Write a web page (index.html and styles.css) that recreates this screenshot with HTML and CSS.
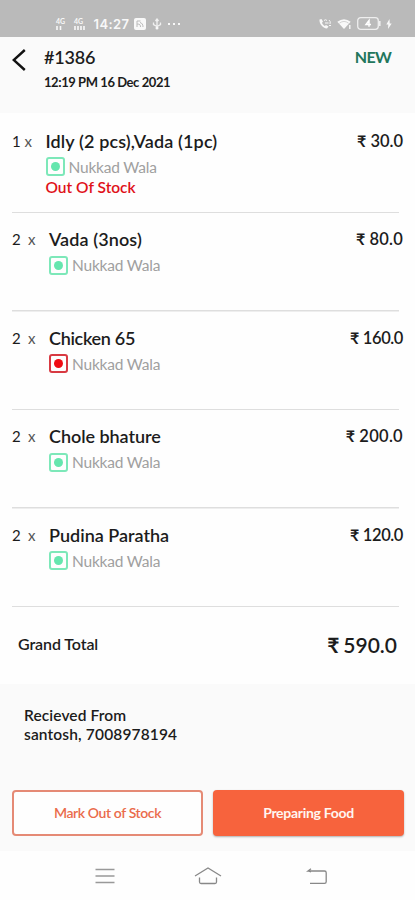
FILE: index.html
```html
<!DOCTYPE html>
<html lang="en">
<head>
<meta charset="utf-8">
<title>Order #1386</title>
<link rel="stylesheet" href="styles.css">
</head>
<body>
<div class="status">
  <div class="sim"><span>4G</span><svg width="7" height="4" viewBox="0 0 7 4"><path d="M1 0v4M4.500 0v4" stroke="#f8f8f8" stroke-width="1.600"/></svg></div>
  <div class="sim sim2"><span>4G</span><svg width="11" height="4" viewBox="0 0 11 4"><path d="M1 0v4M4 0v4M7 0v4M10 0v4" stroke="#f8f8f8" stroke-width="1.600"/></svg></div>
  <span class="clock">14:27</span>
  <svg class="s-cast" width="12" height="12" viewBox="0 0 12 12"><rect width="12" height="12" rx="2" fill="#f8f8f8"/><path d="M3 9V3h3.500M3 6c3 0 3.500 1 3.500 3M6 4.500c2 .5 3 2 3 4.500" fill="none" stroke="#bababa" stroke-width="1"/></svg>
  <svg class="s-usb" width="10" height="12" viewBox="0 0 10 12"><path d="M5 1v9M1.500 4.500v2L5 8.500l3.500-2v-2M3.500 3L5 1l1.500 2" fill="none" stroke="#f0f0f0" stroke-width="1.300"/><circle cx="5" cy="10" r="1.500" fill="#f8f8f8"/></svg>
  <span class="more"><i></i><i></i><i></i></span>
  <div class="s-right">
    <svg width="14" height="12" viewBox="0 0 14 12"><path d="M1.500 1.500c-.5 4 3 8.500 7.500 9l1.500-2-2.500-1.500-1.200 1C5.300 7 4.500 6 4 4.700l1-1.200L3.500 1z" fill="#f8f8f8"/><path d="M6 2.500q1.500-1.500 3 0M7 5h3.500M11 2q2 1.500 1 4M11 7.500h2" fill="none" stroke="#f8f8f8" stroke-width="1"/></svg>
    <svg width="15" height="12" viewBox="0 0 15 12"><path d="M.3 3.800Q7-1.500 13.700 3.800L7 11z" fill="#f8f8f8"/><path d="M2.400 5.200q4.600-3.500 9.200 0" fill="none" stroke="#bababa" stroke-width=".6"/><path d="M12.800 7v4" stroke="#f8f8f8" stroke-width="1.400"/></svg>
    <svg width="24" height="13" viewBox="0 0 24 13"><rect x=".7" y=".7" width="20.600" height="11.600" rx="3" fill="none" stroke="#eee" stroke-width="1.300"/><path d="M22.800 4v5" stroke="#eee" stroke-width="1.600"/><path d="M12 9.800V3.500L9 7.500h5" fill="none" stroke="#fff" stroke-width="1.500"/></svg>
    <svg class="s-bolt" width="6" height="10" viewBox="0 0 6 10"><path d="M3.500 0L.3 5.500h2L2 10l3.700-5.500H3.700z" fill="#f8f8f8"/></svg>
  </div>
</div>
<header class="head">
  <svg class="back" width="14" height="22" viewBox="0 0 14 22"><path d="M12.800 1L1.700 11l11.100 10" fill="none" stroke="#111" stroke-width="2.400"/></svg>
  <div class="order">
    <div class="order-id"><span>#1386</span></div>
    <div class="order-date"><span>12:19 PM 16 Dec 2021</span></div>
  </div>
  <div class="state"><span>NEW</span></div>
</header>
<main class="items">
  <section class="item first">
    <span class="qty">1</span><span class="times">x</span>
    <div class="body">
      <div class="name n1"><span>Idly (2 pcs),Vada (1pc)</span></div>
      <div class="shop"><i class="mark"></i><span>Nukkad Wala</span></div>
      <div class="out"><span>Out Of Stock</span></div>
    </div>
    <div class="price"><b>₹</b><span>30.0</span></div>
  </section>
  <section class="item">
    <span class="qty">2</span><span class="times">x</span>
    <div class="body">
      <div class="name n2"><span>Vada (3nos)</span></div>
      <div class="shop"><i class="mark"></i><span>Nukkad Wala</span></div>
    </div>
    <div class="price p2"><b>₹</b><span>80.0</span></div>
  </section>
  <section class="item">
    <span class="qty">2</span><span class="times">x</span>
    <div class="body">
      <div class="name n3"><span>Chicken 65</span></div>
      <div class="shop"><i class="mark red"></i><span>Nukkad Wala</span></div>
    </div>
    <div class="price p3"><b>₹</b><span>160.0</span></div>
  </section>
  <section class="item">
    <span class="qty">2</span><span class="times">x</span>
    <div class="body">
      <div class="name n4"><span>Chole bhature</span></div>
      <div class="shop"><i class="mark"></i><span>Nukkad Wala</span></div>
    </div>
    <div class="price p4"><b>₹</b><span>200.0</span></div>
  </section>
  <section class="item">
    <span class="qty">2</span><span class="times">x</span>
    <div class="body">
      <div class="name n5"><span>Pudina Paratha</span></div>
      <div class="shop"><i class="mark"></i><span>Nukkad Wala</span></div>
    </div>
    <div class="price p5"><b>₹</b><span>120.0</span></div>
  </section>
  <section class="total">
    <div class="total-label"><span>Grand Total</span></div>
    <div class="total-sum"><b>₹</b><span>590.0</span></div>
  </section>
</main>
<section class="foot">
  <div class="from"><span>Recieved From</span></div>
  <div class="who"><span>santosh, 7008978194</span></div>
  <div class="actions">
    <button class="btn ghost"><span>Mark Out of Stock</span></button>
    <button class="btn solid"><span>Preparing Food</span></button>
  </div>
</section>
<nav class="nav">
  <svg width="20" height="16" viewBox="0 0 20 16"><path d="M.5 1.500h19M.5 8h19M.5 14.500h19" stroke="#999" stroke-width="1.500"/></svg>
  <svg class="home" width="28" height="18" viewBox="0 0 28 18"><path d="M1 9L14 1l13 8M5.500 10.500V15q0 1.500 1.500 1.500h14q1.500 0 1.500-1.500v-4.500" fill="none" stroke="#888" stroke-width="1.300"/></svg>
  <svg width="22" height="17" viewBox="0 0 22 17"><path d="M5 .8L2 3h16.500q1.700 0 1.700 1.700v9q0 1.700-1.700 1.700H4M2 3l3 1" fill="none" stroke="#888" stroke-width="1.300"/></svg>
</nav>
</body>
</html>
```
FILE: styles.css
```css
* { box-sizing: border-box; }
body { margin: 0; width: 415px; height: 900px; overflow: hidden; background: #fefefe; color: #1c1c1c; font-family: Lato, "Liberation Sans", sans-serif; display: flex; flex-direction: column; }
span { white-space: nowrap; }
svg { display: block; flex: none; }
i { font-style: normal; }
.status { height: 37px; flex: none; background: #bababa; color: #f8f8f8; display: flex; align-items: center; padding: 10px 23px 0 56px; }
.sim { width: 18px; display: flex; flex-direction: column; gap: 1px; font-size: 7px; line-height: 7px; font-weight: 700; }
.sim2 { width: 19.500px; }
.clock { font-family: Inter, sans-serif; font-size: 13px; font-weight: 600; letter-spacing: .4px; width: 40px; }
.s-usb { margin-left: 6px; }
.more { display: flex; gap: 3px; margin-left: 6px; }
.more i { width: 2px; height: 2px; background: #f8f8f8; }
.s-right { margin-left: auto; display: flex; align-items: center; gap: 5px; }
.head { height: 76px; flex: none; background: #fafafa; display: flex; padding: 0 24px 0 12px; }
.back { margin-top: 12px; }
.order { margin-left: 18px; padding-top: 9px; flex: 1; }
.order-id { font-size: 18px; line-height: 22px; font-weight: 600; height: 22px; letter-spacing: -.2px; }
.order-date { font-size: 13px; line-height: 18px; font-weight: 700; margin-top: 5px; letter-spacing: -.43px; }
.state { font-size: 16px; line-height: 20px; font-weight: 700; color: #22765c; padding-top: 10px; letter-spacing: -.7px; }
.items { background: #fefefe; height: 571px; flex: none; padding-top: 1.500px; }
.item { height: 98.500px; display: flex; padding: 14px 12px 0 12px; background: linear-gradient(#dedede, #dedede) 12px 100% / 387px 1.500px no-repeat; }
.qty { font-size: 15px; line-height: 24px; width: 16px; }
.times { font-size: 15px; line-height: 24px; width: 21px; color: #555; }
.first .times { width: 17.500px; }
.first .qty { width: 12.500px; }
.body { flex: 1; }
.name { font-size: 18px; line-height: 24px; font-weight: 600; height: 24px; }
.n1 { letter-spacing: .12px; }
.first .body { margin-left: 3.500px; }
.n2 { letter-spacing: .1px; }
.n3 { letter-spacing: -.3px; }
.n4 { letter-spacing: -.05px; }
.shop { display: flex; align-items: center; gap: 4px; height: 20px; margin-top: 4px; font-size: 15.500px; letter-spacing: -.2px; color: #a0a0a0; }
.mark { width: 19px; height: 19px; border: 2px solid #7de8b9; border-radius: 3px; display: grid; place-items: center; }
.mark::before { content: ""; width: 9px; height: 9px; border-radius: 50%; background: #65e6ae; }
.mark.red { border-color: #d83a42; }
.mark.red::before { background: #f00b12; }
.out { color: #e01119; font-size: 15.500px; line-height: 20px; font-weight: 600; }
.price { display: flex; font-size: 16.500px; line-height: 24px; font-weight: 600; gap: 4px; }
.price b { font-size: 16px; font-weight: 700; }
.p2 { letter-spacing: .2px; }
.p3, .p5 { letter-spacing: -.4px; }
.p4 { letter-spacing: .3px; }
.total { display: flex; justify-content: space-between; padding: 24.500px 18px 0 18px; }
.total-label { font-size: 16px; line-height: 24px; font-weight: 600; letter-spacing: -.1px; }
.total-sum { display: flex; gap: 4px; font-size: 21px; line-height: 28px; font-weight: 600; margin-top: -1px; }
.total-sum b { font-size: 21px; font-weight: 700; }
.foot { background: #fafafa; height: 167px; flex: none; padding: 21px 11px 0 12px; }
.from, .who { padding-left: 12px; font-size: 15.500px; line-height: 20px; height: 19px; font-weight: 600; }
.from { letter-spacing: .1px; }
.who { letter-spacing: .15px; }
.actions { display: flex; gap: 10px; margin-top: 47px; }
.btn { height: 46px; width: 191px; padding: 0; border-radius: 4px; font: 600 14px/20px Lato, sans-serif; letter-spacing: -.4px; }
.ghost { border: 2px solid #e58a75; background: #fefefe; color: #ea6b4b; }
.solid { border: 0; background: #f7633d; color: #fff5f0; font-weight: 700; letter-spacing: -.3px; box-shadow: 0 1px 2px rgba(0,0,0,.3); }
.nav { height: 49px; flex: none; display: flex; align-items: center; padding: 1px 87px 0 95px; }
.home { margin: 0 84px 0 79px; }
```
